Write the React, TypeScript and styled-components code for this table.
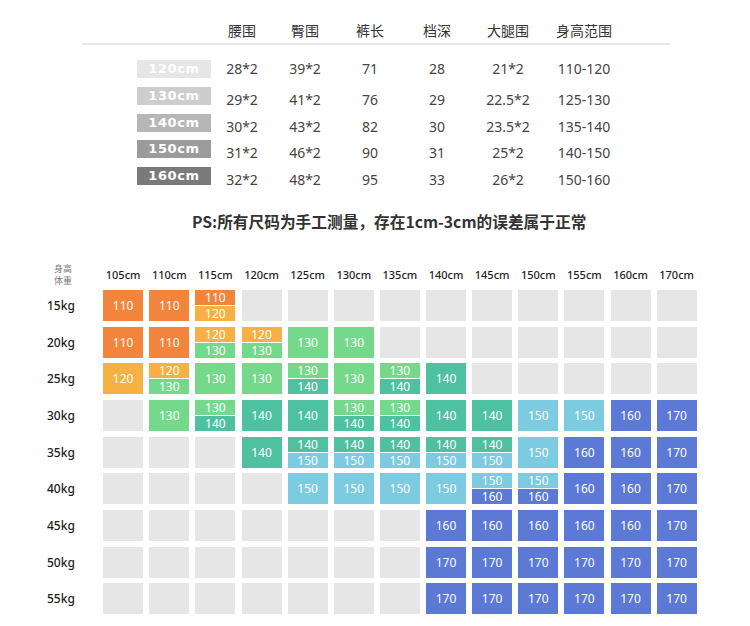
import React from "react";
import styled, { createGlobalStyle } from "styled-components";

const Global = createGlobalStyle`
  html, body { margin: 0; padding: 0; background: #ffffff; }
  body {
    width: 750px;
    height: 626px;
    overflow: hidden;
    font-family: "Noto Sans", "Noto Sans CJK SC", sans-serif;
  }
`;

const Page = styled.div`
  width: 750px;
  height: 626px;
  display: flex;
  flex-direction: column;
`;

/* ---------- top measurement table ---------- */

const SpecTable = styled.div`
  margin-left: 83px;
  width: 587px;
  padding-top: 16px;
`;

const specCols = "54px 74px 62px 64px 66px 68px 74px 78px";

const SpecHeader = styled.div`
  display: grid;
  grid-template-columns: ${specCols};
  height: 27px;
  align-items: center;
  border-bottom: 2px solid #e6e6e6;
`;

const HeadCell = styled.div`
  text-align: center;
  font-family: "Noto Sans CJK SC", sans-serif;
  font-size: 14px;
  color: #333333;
`;

const SpecRows = styled.div`
  margin-top: 15px;
  display: flex;
  flex-direction: column;
  gap: 8.75px;
`;

const SpecRow = styled.div`
  display: grid;
  grid-template-columns: ${specCols};
  height: 18px;
  align-items: center;
`;

const SizeTag = styled.div<{ $shade: string }>`
  grid-column: 2;
  height: 18px;
  background: ${(p) => p.$shade};
  color: #ffffff;
  font-family: "DejaVu Sans", sans-serif;
  font-weight: bold;
  font-size: 13px;
  letter-spacing: 0.6px;
  line-height: 18px;
  text-align: center;
`;

const Value = styled.div<{ $drop: number }>`
  text-align: center;
  font-size: 14px;
  color: #444444;
  line-height: 18px;
  transform: translateY(${(p) => p.$drop}px);
`;

const Note = styled.div`
  margin-top: 25.7px;
  padding-left: 192px;
  height: 22px;
  line-height: 22px;
  font-family: "Noto Sans CJK SC", sans-serif;
  font-weight: bold;
  font-size: 15.7px;
  color: #333333;
  white-space: nowrap;
`;

/* ---------- size chart grid ---------- */

const Chart = styled.div`
  margin-top: 27.6px;
  margin-left: 46px;
  display: grid;
  grid-template-columns: 51px repeat(13, 40px);
  grid-template-rows: 24px repeat(9, 31px);
  column-gap: 6.14px;
  row-gap: 5.67px;
`;

const Corner = styled.div`
  padding-top: 4px;
  padding-left: 7px;
  width: 20px;
  display: flex;
  flex-direction: column;
  gap: 1px;
  font-family: "Noto Sans CJK SC", sans-serif;
  font-size: 9px;
  line-height: 10.5px;
  color: #777777;
  text-align: center;
  white-space: nowrap;
`;

const ColHead = styled.div`
  padding-top: 6px;
  line-height: 18px;
  font-size: 11px;
  font-weight: 500;
  color: #1e1e1e;
  text-align: center;
  white-space: nowrap;
`;

const RowHead = styled.div`
  display: flex;
  align-items: center;
  padding-left: 1px;
  font-size: 12px;
  font-weight: 500;
  color: #1e1e1e;
`;

const Cell = styled.div<{ $bg: string }>`
  display: flex;
  align-items: center;
  justify-content: center;
  background: ${(p) => p.$bg};
  color: #ffffff;
  font-size: 12px;
`;

const SplitCell = styled.div`
  display: flex;
  flex-direction: column;
  gap: 1px;
  background: #ffffff;
`;

const Half = styled.div<{ $bg: string }>`
  height: 15px;
  line-height: 15px;
  background: ${(p) => p.$bg};
  color: #ffffff;
  font-size: 12px;
  text-align: center;
`;

const palette: Record<string, string> = {
  "110": "#f2843c",
  "120": "#f6b043",
  "130": "#74d98b",
  "140": "#4ec1a0",
  "150": "#7dcbe1",
  "160": "#5c79d5",
  "170": "#5c79d5",
};
const EMPTY = "#e6e6e6";

const specHeads = ["腰围", "臀围", "裤长", "档深", "大腿围", "身高范围"];
const specData: { size: string; shade: string; vals: string[] }[] = [
  { size: "120cm", shade: "#e6e6e6", vals: ["28*2", "39*2", "71", "28", "21*2", "110-120"] },
  { size: "130cm", shade: "#cdcdcd", vals: ["29*2", "41*2", "76", "29", "22.5*2", "125-130"] },
  { size: "140cm", shade: "#b6b6b6", vals: ["30*2", "43*2", "82", "30", "23.5*2", "135-140"] },
  { size: "150cm", shade: "#9b9b9b", vals: ["31*2", "46*2", "90", "31", "25*2", "140-150"] },
  { size: "160cm", shade: "#7a7a7a", vals: ["32*2", "48*2", "95", "33", "26*2", "150-160"] },
];

const heights = [105, 110, 115, 120, 125, 130, 135, 140, 145, 150, 155, 160, 170];
const E = "";
const chartRows: { w: string; cells: string[] }[] = [
  { w: "15kg", cells: ["110", "110", "110/120", E, E, E, E, E, E, E, E, E, E] },
  { w: "20kg", cells: ["110", "110", "120/130", "120/130", "130", "130", E, E, E, E, E, E, E] },
  { w: "25kg", cells: ["120", "120/130", "130", "130", "130/140", "130", "130/140", "140", E, E, E, E, E] },
  { w: "30kg", cells: [E, "130", "130/140", "140", "140", "130/140", "130/140", "140", "140", "150", "150", "160", "170"] },
  { w: "35kg", cells: [E, E, E, "140", "140/150", "140/150", "140/150", "140/150", "140/150", "150", "160", "160", "170"] },
  { w: "40kg", cells: [E, E, E, E, "150", "150", "150", "150", "150/160", "150/160", "160", "160", "170"] },
  { w: "45kg", cells: [E, E, E, E, E, E, E, "160", "160", "160", "160", "160", "170"] },
  { w: "50kg", cells: [E, E, E, E, E, E, E, "170", "170", "170", "170", "170", "170"] },
  { w: "55kg", cells: [E, E, E, E, E, E, E, "170", "170", "170", "170", "170", "170"] },
];

function ChartCell({ v }: { v: string }) {
  if (!v) return <Cell $bg={EMPTY} />;
  if (v.includes("/")) {
    const [a, b] = v.split("/");
    return (
      <SplitCell>
        <Half $bg={palette[a]}>{a}</Half>
        <Half $bg={palette[b]}>{b}</Half>
      </SplitCell>
    );
  }
  return <Cell $bg={palette[v]}>{v}</Cell>;
}

export default function App() {
  return (
    <>
      <Global />
      <Page>
        <SpecTable>
          <SpecHeader>
            <span />
            <span />
            {specHeads.map((h) => (
              <HeadCell key={h}>{h}</HeadCell>
            ))}
          </SpecHeader>
          <SpecRows>
            {specData.map((r, i) => (
              <SpecRow key={r.size}>
                <SizeTag $shade={r.shade}>{r.size}</SizeTag>
                {r.vals.map((v, j) => (
                  <Value key={j} $drop={i === 0 ? 0 : 4}>
                    {v}
                  </Value>
                ))}
              </SpecRow>
            ))}
          </SpecRows>
        </SpecTable>

        <Note>PS:所有尺码为手工测量，存在1cm-3cm的误差属于正常</Note>

        <Chart>
          <Corner>
            <span>身高</span>
            <span>体重</span>
          </Corner>
          {heights.map((h) => (
            <ColHead key={h}>{h}cm</ColHead>
          ))}
          {chartRows.map((r) => (
            <React.Fragment key={r.w}>
              <RowHead>{r.w}</RowHead>
              {r.cells.map((c, i) => (
                <ChartCell key={i} v={c} />
              ))}
            </React.Fragment>
          ))}
        </Chart>
      </Page>
    </>
  );
}
